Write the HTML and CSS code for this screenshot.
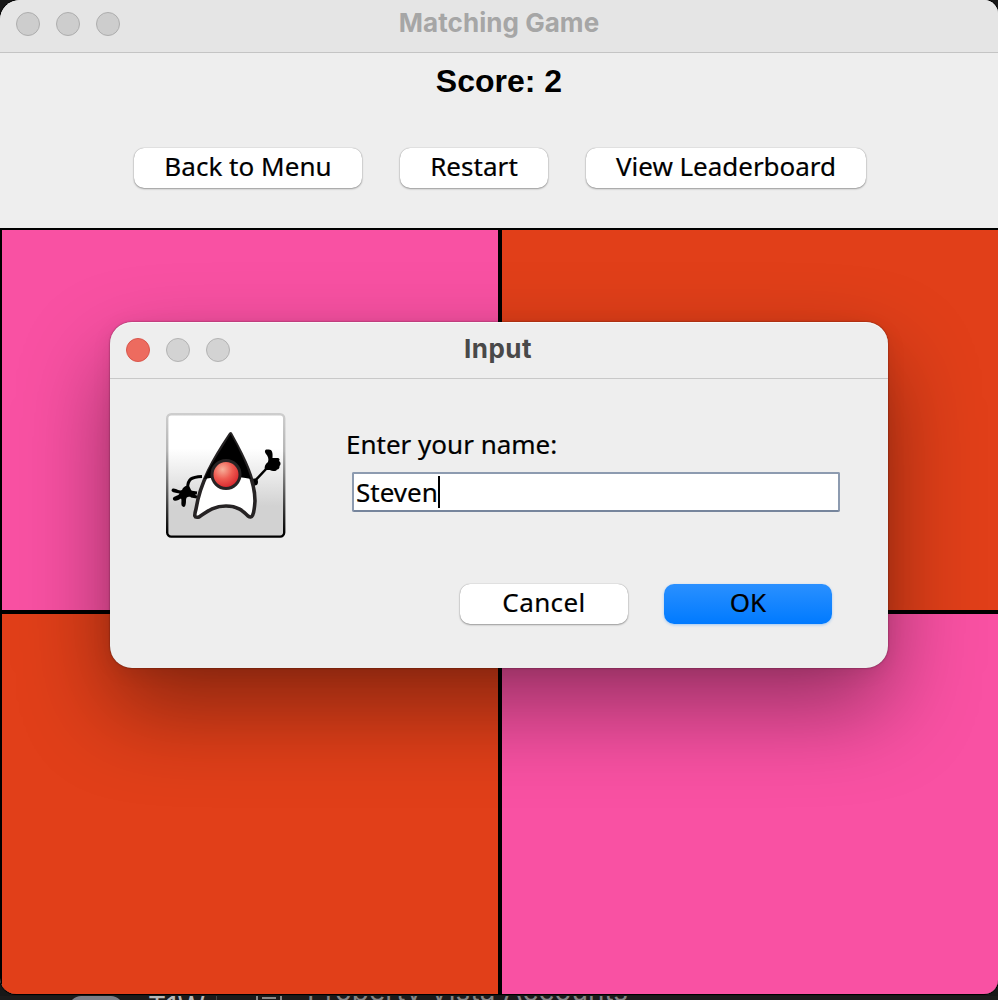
FILE: index.html
```html
<!DOCTYPE html>
<html lang="en">
<head>
<meta charset="utf-8">
<title>Matching Game</title>
<link rel="stylesheet" href="styles.css">
</head>
<body>
<div class="desktop-strip"><span class="avatar"></span><span class="strip-time">T1W</span><span class="strip-rule"></span><span class="strip-icon"></span><span class="strip-title">Property Vista Accounts</span></div>
<main class="window">
  <header class="titlebar">
    <div class="lights"><i class="light"></i><i class="light"></i><i class="light"></i></div>
    <h1 class="title">Matching Game</h1>
  </header>
  <section class="panel">
    <div class="score">Score: 2</div>
    <div class="toolbar">
      <button class="btn btn-menu"><span>Back to Menu</span></button>
      <button class="btn btn-restart"><span>Restart</span></button>
      <button class="btn btn-leader"><span>View Leaderboard</span></button>
    </div>
  </section>
  <section class="board">
    <div class="cell pink"></div><div class="cell orange"></div>
    <div class="cell orange"></div><div class="cell pink"></div>
  </section>
</main>
<div class="dialog">
  <header class="dialog-bar">
    <div class="lights"><i class="light close"></i><i class="light"></i><i class="light"></i></div>
    <h2 class="dialog-title">Input</h2>
  </header>
  <div class="dialog-body">
    <svg class="duke" viewBox="0 0 120 125" width="120" height="125">
      <defs>
        <linearGradient id="bg" x1="0" y1="0" x2="0" y2="1"><stop offset=".28" stop-color="#fff"/><stop offset=".75" stop-color="#d2d2d2"/></linearGradient>
        <linearGradient id="edge" x1="0" y1="0" x2="0" y2="1"><stop offset="0" stop-color="#cdcdcd"/><stop offset=".3" stop-color="#b5b5b5"/><stop offset=".98" stop-color="#000"/></linearGradient>
        <radialGradient id="nose" cx=".38" cy=".32" r=".7"><stop offset="0" stop-color="#f6b09a"/><stop offset=".5" stop-color="#ee5b51"/><stop offset="1" stop-color="#d5222a"/></radialGradient>
      </defs>
      <rect x="1.2" y="1.2" width="117" height="122.4" rx="4" fill="url(#bg)" stroke="url(#edge)" stroke-width="2.4"/>
      <path d="M36 63.500C25 64 22 66 21.500 75" fill="none" stroke="#000" stroke-width="3"/>
      <path d="M31 80 L24 79 M31 84 L25 83" stroke="#000" stroke-width="3"/>
      <path d="M25 84 C22 83 20 84 20 87 C20 89 20 90 19.500 92 C19 95 16 94 15.500 92 C15 90 16 87 15 85.500 C13 87 10 88.500 8 87.500 C6 86 7 84 9 83.500 C11 82.500 13 82 13.500 80.500 C10 80 6 79.500 5.500 77.500 C5.500 75 8 75 10 76 C12 77 14 78 16 77 C17 74 20 72 23 73 C25 76 25 79 29 79 L30 84Z"/>
      <path d="M86 71 L101 55" stroke="#000" stroke-width="2.5"/><circle cx="88.500" cy="69" r="3.500"/>
      <path d="M99 57 C98 54 99 51 102 49 C103 46 102 43 100 41 C98 38 99 36 102 36.500 C106 36 107 39 106.500 45 L111 45 C114 45 114 47 113 48 C115 49 115 52 113.500 53 C114 55 112 57 111 56.500 C110 59 106 58 104 57Z"/>
      <path d="M64.500 21 C47 47 34 70 30 96 C28 103 28 105 33 104 C43 97 49 93 60 93 C72 93 77 98 82 103 C86 106 88 103 89 88 C89 68 79 47 64.500 21Z" fill="#fff" stroke="#262324" stroke-width="3.600" stroke-linejoin="round"/>
      <path d="M64.500 21 C52 42 43 54 38 66 C55 63 71 63 85 66 C80 50 73 36 64.500 21Z"/>
      <circle cx="60" cy="61.500" r="14" fill="url(#nose)" stroke="#262324" stroke-width="3"/>
    </svg>
    <div class="form">
      <label class="label" for="name">Enter your name:</label>
      <div class="field" id="name"><span>Steven</span><i class="caret"></i></div>
      <div class="actions">
        <button class="btn btn-cancel"><span>Cancel</span></button>
        <button class="btn btn-ok"><span>OK</span></button>
      </div>
    </div>
  </div>
</div>
</body>
</html>
```
FILE: styles.css
```css
* { box-sizing: border-box; }
body { margin: 0; width: 998px; height: 1000px; overflow: hidden; background: #171717; position: relative; font-family: "Noto Sans", sans-serif; color: #000; }
h1, h2 { margin: 0; }
.window { position: relative; width: 998px; height: 994px; border-radius: 20px 14px 14px 16px; overflow: hidden; background: #eee; box-shadow: 0 0 0 1px #000; }
.titlebar { height: 53px; background: #e5e5e5; border-bottom: 1px solid #c4c4c4; display: grid; }
.lights, .title, .dialog-title { grid-area: 1 / 1; }
.lights { display: flex; gap: 16px; padding: 12px 0 0 16px; }
.light { width: 24px; height: 24px; border-radius: 50%; background: #cdcdcd; border: 1px solid #adadad; }
.title { font: 700 26px/46px Inter, sans-serif; letter-spacing: .05px; text-align: center; color: #a6a6a6; }
.panel { height: 175px; display: flex; flex-direction: column; align-items: center; }
.score { font: 700 32px/56px "Liberation Sans", Arial, sans-serif; }
.toolbar { display: flex; gap: 38px; margin-top: 39px; padding-left: 2px; }
.btn { height: 40px; border: 0; border-radius: 10px; padding: 0; background: #fff; font: 26px/36px "Noto Sans", sans-serif; letter-spacing: .04px; color: #000; display: flex; align-items: flex-start; justify-content: center; white-space: nowrap; box-shadow: 0 1px 2px #0005, 0 0 1px #0006; }
.btn, .label, .field span { -webkit-text-stroke: .2px #000; }
.btn-menu { width: 228px; }
.btn-restart { width: 148px; }
.btn-leader { width: 280px; letter-spacing: -.03px; }
.board { height: 766px; background: #000; padding: 2px 0 0 2px; display: grid; grid-template: 380px 380px / 496px 496px; gap: 4px; }
.pink { background: #f951a3; }
.orange { background: #e13f19; }
.dialog { position: absolute; left: 110px; top: 322px; width: 778px; height: 346px; border-radius: 22px; background: #eee; box-shadow: 0 0 2px #0008, 0 40px 90px #00000068, 0 4px 20px #00000014; }
.dialog-bar { height: 57px; border-bottom: 1px solid #c8c8c8; display: grid; border-radius: 22px 22px 0 0; box-shadow: inset 0 1px #fff9; }
.dialog-bar .lights { padding-top: 16px; }
.dialog-bar .light { background: #d3d3d3; border-color: #b3b3b3; }
.dialog-bar .close { background: #ed6b5f; border-color: #d9564c; }
.dialog-title { font: 700 26px/54px Inter, sans-serif; letter-spacing: .5px; text-align: center; color: #494949; padding-right: 2px; }
.dialog-body { display: flex; padding: 34px 48px 0 56px; }
.duke { flex: none; }
.form { margin-left: 60px; width: 494px; padding-top: 13px; }
.label { display: block; font-size: 26px; line-height: 36px; height: 46px; }
.field { height: 40px; width: 488px; margin-left: 6px; border: 2px solid #8d9bb0; border-bottom-color: #76859c; border-radius: 2px; background: #fff; padding-left: 2px; display: flex; align-items: center; font-size: 26px; line-height: 36px; }
.caret { width: 2px; height: 32px; background: #000; }
.actions { display: flex; justify-content: flex-end; gap: 36px; margin-top: 72px; padding-right: 8px; }
.actions .btn { width: 168px; }
.actions .btn-cancel { letter-spacing: .4px; }
.actions .btn-ok { background: linear-gradient(#2a90ff, #007aff); box-shadow: 0 1px 3px #007aff55; }
.desktop-strip { position: absolute; left: 0; top: 996px; width: 998px; height: 4px; overflow: hidden; background: #1b1b1b; color: #858585; display: flex; padding-left: 69px; font: 28px/24px Inter, sans-serif; white-space: nowrap; }
.avatar { flex: none; width: 54px; height: 24px; border-radius: 16px; background: #7c7f88; }
.strip-time { flex: none; margin: -1px 0 0 25px; width: 68px; color: #b8b8b8; }
.strip-rule { width: 1px; height: 4px; background: #444; }
.strip-icon { flex: none; margin: 0 25px 0 39px; width: 26px; height: 4px; border: solid #888; border-width: 0 2px; background: linear-gradient(#888, #888) center 1px / 14px 2px no-repeat; }
.strip-title { margin-top: -17px; }
```
